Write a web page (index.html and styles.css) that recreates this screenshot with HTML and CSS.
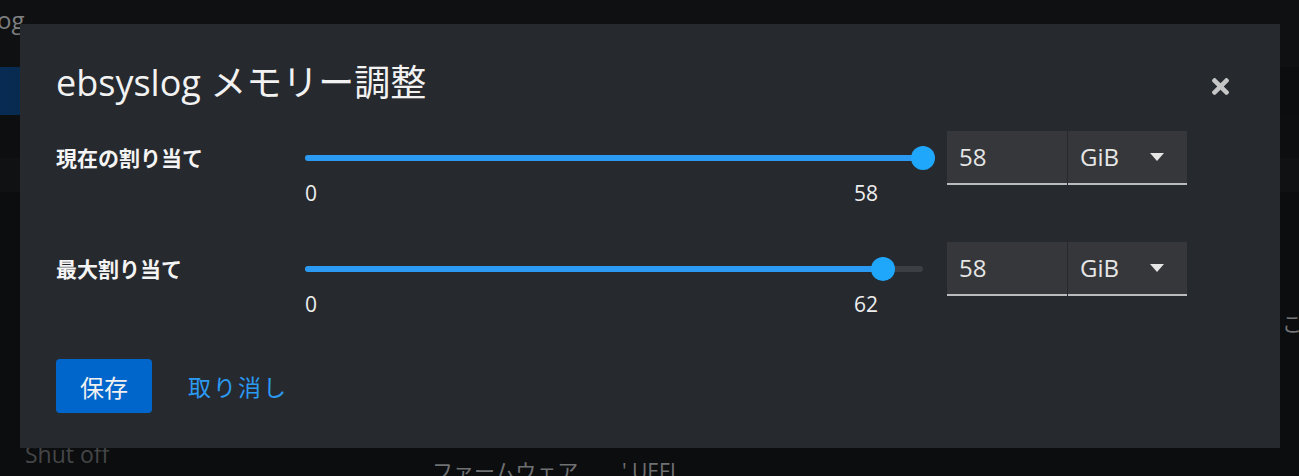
FILE: index.html
```html
<!DOCTYPE html>
<html lang="ja">
<head>
<meta charset="utf-8">
<title>ebsyslog メモリー調整</title>
<link rel="stylesheet" href="styles.css">
</head>
<body>
<div class="page">
  <div class="page-top">og</div>
  <div class="nav-active"></div>
  <div class="page-gap"></div>
  <div class="page-band"></div>
  <div class="page-mid"><span class="edge-text">こ</span></div>
  <div class="page-bottom">
    <span class="status">Shut off</span>
    <span class="firmware">ファームウェア</span>
    <span class="firmware-val">' UEFI</span>
  </div>
</div>

<div class="modal" role="dialog" aria-label="ebsyslog メモリー調整">
  <header class="modal-header">
    <h1 class="modal-title">ebsyslog メモリー調整</h1>
    <button class="close-btn" aria-label="閉じる">
      <svg viewBox="0 80 352 352" width="17" height="17" aria-hidden="true"><path d="M242.72 256l100.07-100.07c12.28-12.28 12.28-32.19 0-44.48l-22.24-22.24c-12.28-12.28-32.19-12.28-44.48 0L176 189.28 75.93 89.21c-12.28-12.28-32.19-12.28-44.48 0L9.21 111.45c-12.28 12.28-12.28 32.19 0 44.48L109.28 256 9.21 356.07c-12.28 12.28-12.28 32.19 0 44.48l22.24 22.24c12.28 12.28 32.2 12.28 44.48 0L176 322.72l100.07 100.07c12.28 12.28 32.2 12.28 44.48 0l22.24-22.24c12.28-12.28 12.28-32.19 0-44.48L242.72 256z"/></svg>
    </button>
  </header>

  <div class="form">
    <div class="field">
      <div class="field-label">現在の割り当て</div>
      <div class="slider">
        <div class="rail">
          <div class="track">
            <div class="fill" style="width:100%"></div>
            <div class="thumb" style="left:100%"></div>
          </div>
        </div>
        <div class="ticks"><span>0</span><span>58</span></div>
      </div>
      <div class="amount">
        <div class="num-input">58</div>
        <div class="unit-select"><span>GiB</span><span class="caret"></span></div>
      </div>
    </div>

    <div class="field">
      <div class="field-label">最大割り当て</div>
      <div class="slider">
        <div class="rail">
          <div class="track">
            <div class="fill" style="width:93.55%"></div>
            <div class="thumb" style="left:93.55%"></div>
          </div>
        </div>
        <div class="ticks"><span>0</span><span>62</span></div>
      </div>
      <div class="amount">
        <div class="num-input">58</div>
        <div class="unit-select"><span>GiB</span><span class="caret"></span></div>
      </div>
    </div>
  </div>

  <footer class="actions">
    <button class="btn-primary">保存</button>
    <button class="btn-link">取り消し</button>
  </footer>
</div>
</body>
</html>
```

FILE: styles.css
```css
* { box-sizing: border-box; }

html, body {
  margin: 0;
  padding: 0;
}

body {
  width: 1299px;
  height: 476px;
  overflow: hidden;
  background: #0c0d0f;
  font-family: "Open Sans", "Noto Sans CJK JP", sans-serif;
  color: #f0f0f0;
}

/* ---------- page behind the backdrop ---------- */
.page {
  height: 476px;
  display: flex;
  flex-direction: column;
  background: #0c0d0f;
  overflow: hidden;
}

.page-top {
  height: 67px;
  background: #0f1012;
  color: #7d7e80;
  font-size: 24px;
  line-height: 40px;
  text-indent: -3px;
}

.nav-active {
  height: 48px;
  width: 300px;
  background: linear-gradient(90deg, #072b52, #04203d);
}

.page-gap {
  height: 43px;
  background: #0d0e10;
}

.page-band {
  height: 34px;
  background: #101113;
}

.page-mid {
  flex: 1;
  display: flex;
  justify-content: flex-end;
  padding-top: 122px;
}

.edge-text {
  font-size: 20px;
  line-height: 22px;
  color: #76787a;
  width: 17px;
  overflow: hidden;
}

.page-bottom {
  height: 34px;
  flex: none;
  overflow: hidden;
  display: flex;
  align-items: flex-start;
  font-size: 23px;
  line-height: 24px;
}

.status {
  margin-left: 25px;
  color: #444547;
  width: 407px;
}

.firmware {
  color: #6f7072;
  font-size: 21px;
  line-height: 58px;
  width: 190px;
}

.firmware-val {
  color: #6f7072;
  font-size: 21px;
  line-height: 58px;
}

/* ---------- modal ---------- */
.modal {
  position: fixed;
  top: 24px;
  left: 20px;
  width: 1260px;
  height: 424px;
  background: #26292e;
  padding: 36px 36px 0 36px;
  display: flex;
  flex-direction: column;
}

.modal-header {
  display: flex;
  justify-content: space-between;
  align-items: flex-start;
  height: 46px;
}

.modal-title {
  margin: 0;
  font-size: 36px;
  line-height: 46px;
  font-weight: 400;
  color: #f2f2f2;
}

.close-btn {
  width: 48px;
  height: 48px;
  margin-top: 2px;
  border: 0;
  background: transparent;
  padding: 0;
  display: flex;
  align-items: center;
  justify-content: center;
}

.close-btn svg {
  fill: #c6c6c6;
}

.form {
  margin-top: 25px;
  display: flex;
  flex-direction: column;
  gap: 37px;
}

.field {
  display: grid;
  grid-template-columns: 225px 618px 240px;
  column-gap: 24px;
  align-items: start;
}

.field-label {
  font-size: 21px;
  font-weight: 700;
  line-height: 54px;
  height: 54px;
  color: #f4f4f4;
}

.slider {
  display: flex;
  flex-direction: column;
}

.rail {
  height: 54px;
  display: flex;
  align-items: center;
}

.track {
  position: relative;
  width: 100%;
  height: 6px;
  border-radius: 3px;
  background: #3c3f43;
}

.fill {
  height: 6px;
  border-radius: 3px;
  background: #2b9af3;
}

.thumb {
  position: absolute;
  top: 50%;
  width: 24px;
  height: 24px;
  border-radius: 50%;
  background: #1fa7fb;
  transform: translate(-50%, -50%);
}

.ticks {
  display: flex;
  justify-content: space-between;
  padding-right: 45px;
  margin-top: -4px;
  font-size: 21px;
  line-height: 24px;
  color: #eeeeee;
}

.amount {
  display: grid;
  grid-template-columns: 120px 119px;
  column-gap: 1px;
}

.num-input,
.unit-select {
  height: 54px;
  background: #36373b;
  border-bottom: 2px solid #b9bbbd;
  font-size: 24px;
  line-height: 52px;
  padding-left: 12px;
  color: #e6e6e6;
}

.unit-select {
  display: flex;
  align-items: center;
  justify-content: space-between;
  padding-right: 23px;
}

.caret {
  width: 0;
  height: 0;
  border-left: 7.5px solid transparent;
  border-right: 7.5px solid transparent;
  border-top: 8px solid #e6e6e6;
}

.actions {
  margin-top: 43px;
  display: flex;
  align-items: center;
  gap: 24px;
}

.btn-primary {
  height: 54px;
  padding: 0 24px;
  border: 0;
  border-radius: 4px;
  background: #0066cc;
  color: #f0f0f0;
  font-family: "Open Sans", "Noto Sans CJK JP", sans-serif;
  font-size: 24px;
}

.btn-link {
  height: 54px;
  padding: 0 12px;
  border: 0;
  background: transparent;
  color: #2b9af3;
  font-family: "Open Sans", "Noto Sans CJK JP", sans-serif;
  font-size: 23px;
  letter-spacing: 2px;
}
```
